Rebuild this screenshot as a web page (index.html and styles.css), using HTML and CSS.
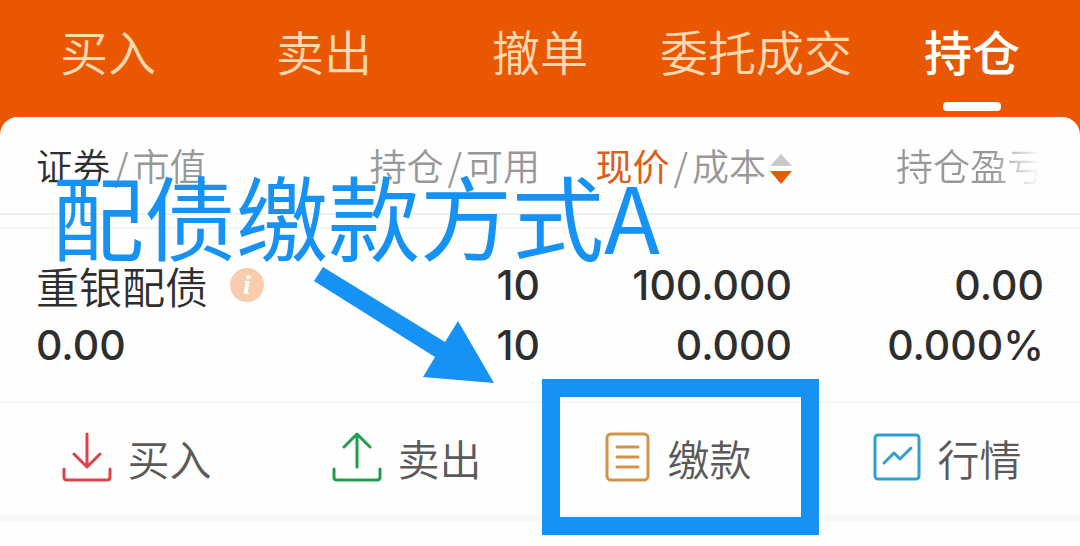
FILE: index.html
```
<!DOCTYPE html>
<html lang="zh-CN">
<head>
  <meta charset="UTF-8" />
  <meta name="viewport" content="width=device-width, initial-scale=1.0" />
  <title>持仓</title>
  <link rel="stylesheet" href="styles.css">
</head>
<body>
  <nav class="tabs">
    <a href="#buy">买入</a>
    <a href="#sell">卖出</a>
    <a href="#cancel">撤单</a>
    <a href="#orders">委托成交</a>
    <a href="#positions" class="active">持仓</a>
  </nav>

  <main class="card">
    <table class="positions">
      <thead>
        <tr>
          <th class="first"><span class="dark">证券</span><span class="slash">/</span>市值</th>
          <th>持仓<span class="slash">/</span>可用</th>
          <th class="sorted">
            <span class="hot">现价</span><span class="slash">/</span>成本<svg class="sort" viewBox="0 0 22 30" aria-hidden="true">
              <path d="M11 0 L22 12 H0 Z" fill="#c8c8c8" />
              <path d="M0 17 H22 L11 30 Z" fill="#ea5a04" />
            </svg>
          </th>
          <th class="last"><span class="fade">持仓盈亏</span></th>
        </tr>
      </thead>
      <tbody>
        <tr class="spacer"><td colspan="4"></td></tr>
        <tr class="line-one">
          <td class="first"><div class="name">重银配债<span class="info">i</span></div></td>
          <td>10</td>
          <td>100.000</td>
          <td class="last">0.00</td>
        </tr>
        <tr class="line-two">
          <td class="first">0.00</td>
          <td>10</td>
          <td>0.000</td>
          <td class="last">0.000%</td>
        </tr>
      </tbody>
    </table>

    <div class="actions">
      <button type="button">
        <svg class="icon" viewBox="0 0 50 50" fill="none" stroke="#d9444a" stroke-width="3" stroke-linecap="round" stroke-linejoin="round">
          <path d="M25 2 V35 M12 22 L25 35 L38 22" />
          <path d="M2 37 V45 Q2 48 5 48 H45 Q48 48 48 45 V37" />
        </svg>
        买入
      </button>
      <button type="button">
        <svg class="icon" viewBox="0 0 50 50" fill="none" stroke="#1f9f4a" stroke-width="3" stroke-linecap="round" stroke-linejoin="round">
          <path d="M25 3 V35 M12 15 L25 2 L38 15" />
          <path d="M2 37 V45 Q2 48 5 48 H45 Q48 48 48 45 V37" />
        </svg>
        卖出
      </button>
      <button type="button" class="pay">
        <svg class="icon" viewBox="0 0 50 50" fill="none" stroke="#d29346" stroke-width="3" stroke-linecap="round">
          <rect x="5" y="2" width="41" height="46" rx="4" />
          <path d="M15 15 H36 M15 25 H36 M15 35 H36" />
        </svg>
        缴款
      </button>
      <button type="button">
        <svg class="icon" viewBox="0 0 50 50" fill="none" stroke="#2f9fcf" stroke-width="3" stroke-linecap="round" stroke-linejoin="round">
          <rect x="3" y="3" width="44" height="44" rx="3" />
          <path d="M12 31 L22 21 L28 27 L39 16" />
        </svg>
        行情
      </button>
    </div>

    <p class="note">配债缴款方式A</p>
    <svg class="arrow" viewBox="0 0 182 118" aria-hidden="true">
      <path d="M10 1 L132 76 L145 55 L181 117 L110 111 L122 91 L1 15 Z" fill="#1592f4" />
    </svg>
  </main>
</body>
</html>
```

FILE: styles.css
```
* {
  box-sizing: border-box;
}

body {
  margin: 0;
  background: #ea5703;
  color: #2e2e2e;
  font-family: "Noto Sans CJK SC", sans-serif;
}

.tabs {
  display: grid;
  grid-template-columns: repeat(5, 1fr);
  height: 117px;
}

.tabs a {
  position: relative;
  padding-top: 14px;
  color: #ffd9b0;
  font-size: 48px;
  line-height: 72px;
  font-weight: 350;
  text-align: center;
  text-decoration: none;
  white-space: nowrap;
}

.tabs .active {
  color: #fff;
  font-weight: 500;
}

.tabs .active::after {
  content: "";
  position: absolute;
  left: 50%;
  bottom: 6px;
  width: 58px;
  height: 9px;
  margin-left: -29px;
  border-radius: 4px;
  background: #fff;
}

.card {
  position: relative;
  min-height: calc(100vh - 117px);
  border-radius: 18px 18px 0 0;
  background: #fefefe;
}

.positions {
  width: 100%;
  table-layout: fixed;
  border-collapse: collapse;
}

.positions th,
.positions td {
  width: 23.33%;
  padding: 0;
  text-align: right;
  white-space: nowrap;
}

.positions .first {
  width: 26.67%;
  padding-left: 36px;
  text-align: left;
}

.positions .last {
  width: 26.67%;
  padding-right: 36px;
}

.positions th {
  height: 97px;
  border-bottom: 2px solid #f0f0f0;
  color: #989898;
  font-size: 37px;
  line-height: 60px;
  font-weight: 350;
}

.positions .dark {
  color: #2e2e2e;
}

.positions .hot {
  color: #d9601c;
  font-weight: 400;
}

.slash {
  margin: 0 4px;
}

.sort {
  width: 22px;
  height: 30px;
  margin-left: 4px;
  vertical-align: -3px;
}

.fade {
  background: linear-gradient(to right, #989898 65%, #fefefe 98%);
  background-clip: text;
  -webkit-background-clip: text;
  color: transparent;
}

.positions .spacer td {
  height: 14px;
  border-bottom: 2px solid #f4f4f4;
}

.positions td {
  font-family: Inter, sans-serif;
  font-size: 41px;
  line-height: 60px;
  font-weight: 500;
}

.line-one td {
  padding-top: 26px;
}

.line-two td {
  padding-bottom: 26px;
}

.name {
  display: flex;
  align-items: center;
  gap: 22px;
  font-family: "Noto Sans CJK SC", sans-serif;
  font-size: 43px;
  font-weight: 350;
}

.info {
  width: 34px;
  height: 34px;
  border-radius: 50%;
  background: #f9ccae;
  color: #fff;
  font: italic bold 28px/34px "Liberation Serif", serif;
  text-align: center;
}

.actions {
  display: grid;
  grid-template-columns: repeat(4, 1fr);
  border-top: 2px solid #f6f6f6;
  border-bottom: 6px solid #f8f8f8;
}

.actions button {
  position: relative;
  display: flex;
  align-items: center;
  justify-content: center;
  gap: 15px;
  height: 112px;
  padding: 0 0 4px 4px;
  border: 0;
  background: none;
  color: #5a5a5a;
  font-family: inherit;
  font-size: 42px;
  font-weight: 350;
}

.icon {
  width: 50px;
  height: 50px;
}

.pay::after {
  content: "";
  position: absolute;
  inset: -24px -9px -20px 2px;
  border: 18px solid #1592f4;
}

.note {
  position: absolute;
  left: 52px;
  top: 47px;
  margin: 0;
  color: #1592f4;
  font-size: 92px;
  line-height: 100px;
  font-weight: 400;
  white-space: nowrap;
}

.arrow {
  position: absolute;
  left: 313px;
  top: 149px;
  width: 182px;
  height: 118px;
}
```
